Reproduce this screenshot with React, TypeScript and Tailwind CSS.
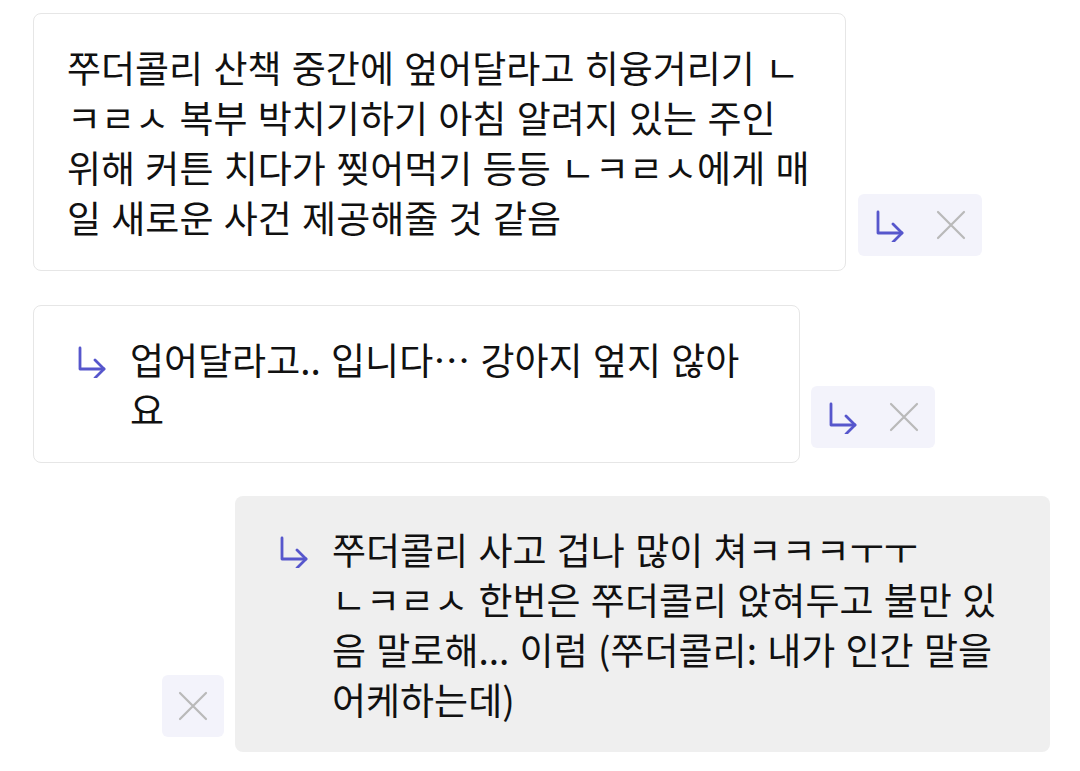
const ReplyIcon = () => (
  <svg width="32" height="32" viewBox="0 0 32 32" fill="none" stroke="#5656cc" strokeWidth="2.8" strokeLinecap="round" strokeLinejoin="round">
    <path d="M4 2v21h24" />
    <path d="M19 14l9 9-9 9" />
  </svg>
)

const CloseIcon = () => (
  <svg width="30" height="30" viewBox="0 0 30 30" fill="none" stroke="#b9b9b9" strokeWidth="2.2" strokeLinecap="round">
    <path d="M2 2l26 26M28 2L2 28" />
  </svg>
)

const Actions = ({ reply = true }: { reply?: boolean }) => (
  <div className="flex rounded-md bg-[#f3f3fb] mb-[15px] shrink-0">
    {reply && (
      <button className="w-[62px] h-[62px] flex items-center justify-center pl-[2px] pt-[2px]">
        <ReplyIcon />
      </button>
    )}
    <button className="w-[62px] h-[62px] flex items-center justify-center">
      <CloseIcon />
    </button>
  </div>
)

const Lines = ({ lines }: { lines: string[] }) => (
  <div className="whitespace-nowrap">
    {lines.map((l, i) => (
      <div key={i}>{l}</div>
    ))}
  </div>
)

export default function App() {
  return (
    <div
      className="w-[1080px] h-[771px] bg-white text-[#111] text-[37px] leading-[50px] [word-spacing:2px] pt-[13px] overflow-hidden"
      style={{ fontFamily: '"Noto Sans CJK KR", "Noto Sans", sans-serif' }}
    >
      <div className="flex items-end gap-[12px] pl-[33px]">
        <div className="w-[813px] border border-[#e6e6e6] rounded-lg pl-[33px] py-[28px]">
          <Lines
            lines={[
              '쭈더콜리 산책 중간에 엎어달라고 히융거리기 ㄴ',
              'ㅋㄹㅅ 복부 박치기하기 아침 알려지 있는 주인',
              '위해 커튼 치다가 찢어먹기 등등 ㄴㅋㄹㅅ에게 매',
              '일 새로운 사건 제공해줄 것 같음',
            ]}
          />
        </div>
        <Actions />
      </div>

      <div className="flex items-end gap-[11px] pl-[33px] mt-[34px]">
        <div className="w-[767px] border border-[#e6e6e6] rounded-lg pl-[33px] py-[28px] flex">
          <div className="w-[63px] shrink-0 pl-[9px] pt-[12px]">
            <ReplyIcon />
          </div>
          <Lines lines={['업어달라고.. 입니다… 강아지 엎지 않아', '요']} />
        </div>
        <Actions />
      </div>

      <div className="flex items-end justify-end gap-[11px] pr-[30px] mt-[33px]">
        <Actions reply={false} />
        <div className="w-[815px] bg-[#efefef] rounded-lg pl-[34px] py-[28px] flex">
          <div className="w-[63px] shrink-0 pl-[9px] pt-[12px]">
            <ReplyIcon />
          </div>
          <Lines
            lines={[
              '쭈더콜리 사고 겁나 많이 쳐ㅋㅋㅋㅜㅜ',
              'ㄴㅋㄹㅅ 한번은 쭈더콜리 앉혀두고 불만 있',
              '음 말로해... 이럼 (쭈더콜리: 내가 인간 말을',
              '어케하는데)',
            ]}
          />
        </div>
      </div>
    </div>
  )
}
